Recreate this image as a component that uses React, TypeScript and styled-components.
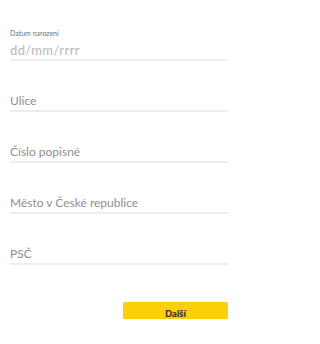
import styled, { createGlobalStyle } from 'styled-components'

const GlobalS = createGlobalStyle`
    html, body {
        margin: 0;
        padding: 0;
        background-color: #ffffff;
    }
    * {
        box-sizing: border-box;
    }
`

const PageS = styled.main`
    display: flex;
    flex-direction: column;
    width: 236px;
    height: 344px;
    padding: 10px 8px 0 10px;
    font-family: Lato, "Noto Sans", sans-serif;
    background-color: #ffffff;
`

const FieldS = styled.label`
    display: flex;
    flex-direction: column;
    justify-content: flex-end;
    height: 51px;
    border-bottom: 2px solid #ededed;
`

const LabelTxtS = styled.span`
    font-size: 7px;
    line-height: 8px;
    color: #707070;
    margin-bottom: 3px;
`

const InputS = styled.input`
    display: block;
    width: 100%;
    height: 19px;
    padding: 0;
    border: none;
    outline: none;
    background: transparent;
    font-family: inherit;
    font-size: 12px;
    color: #555;

    &::placeholder {
        color: #8e8e8e;
    }
`

const DateInputS = styled(InputS)`
    font-size: 13px;
    letter-spacing: 0.4px;

    &::placeholder {
        color: #b8b8b8;
    }
`

const FooterS = styled.div`
    display: flex;
    justify-content: flex-end;
    margin-top: 37px;
`

const NextBtnS = styled.button`
    width: 105px;
    height: 17px;
    padding: 7px 0 0;
    border: none;
    border-radius: 2px 2px 0 0;
    background-color: #fccf0a;
    font-family: inherit;
    font-size: 9.5px;
    line-height: 10px;
    font-weight: 900;
    color: #333;
    cursor: pointer;
`

const fields = [
    'Ulice',
    'Číslo popisné',
    'Město v České republice',
    'PSČ'
]

const App = () => {
    return (
        <>
            <GlobalS />
            <PageS>
                <FieldS>
                    <LabelTxtS>Datum narození</LabelTxtS>
                    <DateInputS placeholder='dd/mm/rrrr' />
                </FieldS>
                {fields.map(f =>
                    <FieldS key={ f }>
                        <InputS placeholder={ f } />
                    </FieldS>
                )}
                <FooterS>
                    <NextBtnS>Další</NextBtnS>
                </FooterS>
            </PageS>
        </>
    )
}

export default App
